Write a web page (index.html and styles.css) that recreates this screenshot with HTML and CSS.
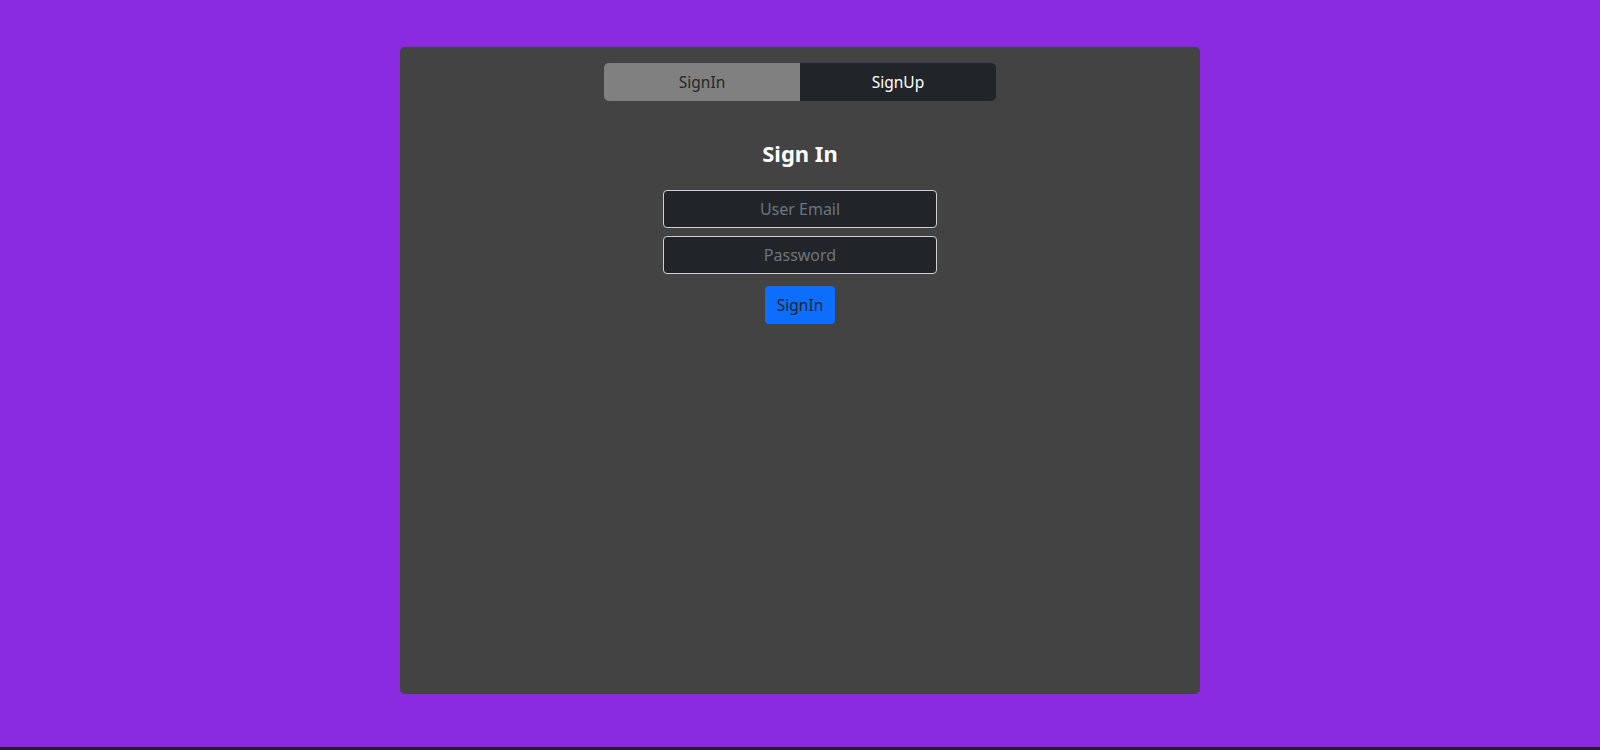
FILE: index.html
```html
<!DOCTYPE html>
<html lang="en">
<head>
<meta charset="utf-8">
<title>Sign In</title>
<link rel="stylesheet" href="styles.css">
</head>
<body>
<div class="page">
  <div class="card">
    <div class="tabs">
      <button class="tab tab-active">SignIn</button>
      <button class="tab tab-dark">SignUp</button>
    </div>
    <form class="form">
      <h4 class="title">Sign In</h4>
      <input class="field" type="email" placeholder="User Email">
      <input class="field" type="password" placeholder="Password">
      <button class="submit" type="button">SignIn</button>
    </form>
  </div>
</div>
</body>
</html>
```

FILE: styles.css
```css
html {
  background: #2a1a2c;
  height: 100%;
}
body {
  margin: 0;
  font-family: "Noto Sans", "Open Sans", sans-serif;
}
.page {
  height: 747px;
  background: #8a2be2;
  padding-top: 47px;
  box-sizing: border-box;
}
.card {
  width: 800px;
  height: 647px;
  margin: 0 auto;
  background: #434343;
  border-radius: 5px;
  padding-top: 16px;
  box-sizing: border-box;
}
.tabs {
  width: 392px;
  margin: 0 auto;
  display: flex;
  border-radius: 5px;
  overflow: hidden;
}
.tab {
  flex: 1;
  height: 38px;
  border: none;
  font-family: inherit;
  font-size: 15.5px;
  padding: 0;
}
.tab-active {
  background: #808080;
  color: #25272b;
}
.tab-dark {
  background: #212529;
  color: #ffffff;
}
.form {
  display: flex;
  flex-direction: column;
  align-items: center;
  padding-top: 37px;
}
.title {
  margin: 0 0 22px;
  color: #ffffff;
  font-size: 22px;
  font-weight: 700;
  line-height: 30px;
}
.field {
  width: 274px;
  height: 38px;
  box-sizing: border-box;
  background: #212529;
  border: 1px solid #d0d0d0;
  border-radius: 4px;
  color: #ffffff;
  text-align: center;
  font-family: inherit;
  font-size: 16px;
  margin-bottom: 8px;
  outline: none;
}
.field::placeholder {
  color: #6c757d;
}
.submit {
  margin-top: 4px;
  width: 70px;
  height: 38px;
  background: #0d6efd;
  border: none;
  border-radius: 4px;
  color: #212529;
  font-family: inherit;
  font-size: 15.5px;
  padding: 0;
}
```
